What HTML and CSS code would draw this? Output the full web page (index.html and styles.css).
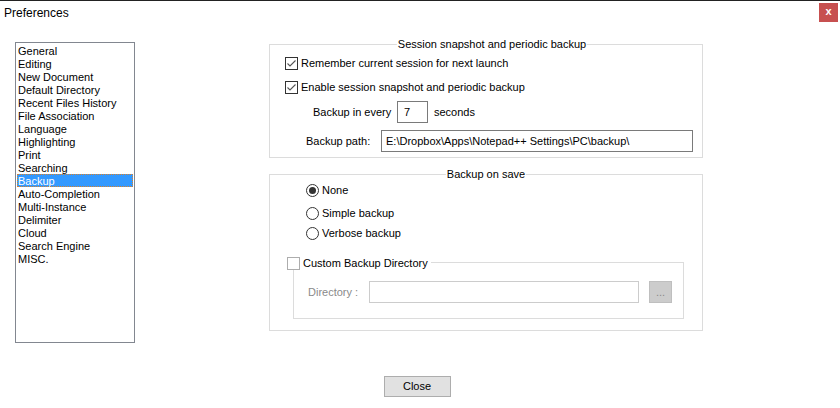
FILE: index.html
```html
<!DOCTYPE html>
<html lang="en">
  <head>
    <meta charset="UTF-8" />
    <title>Preferences</title>
    <link rel="stylesheet" href="styles.css">
  </head>
  <body>
    <div class="titlebar">
      <span class="title">Preferences</span>
      <span class="close-x">x</span>
    </div>

    <div class="main">
      <ul class="nav">
        <li>General</li>
        <li>Editing</li>
        <li>New Document</li>
        <li>Default Directory</li>
        <li>Recent Files History</li>
        <li>File Association</li>
        <li>Language</li>
        <li>Highlighting</li>
        <li>Print</li>
        <li>Searching</li>
        <li class="active">Backup</li>
        <li>Auto-Completion</li>
        <li>Multi-Instance</li>
        <li>Delimiter</li>
        <li>Cloud</li>
        <li>Search Engine</li>
        <li>MISC.</li>
      </ul>

      <div class="panel">
        <div class="group g-session">
          <span class="group-title">Session snapshot and periodic backup</span>
          <div class="row">
            <span class="check on"><svg width="11" height="11" viewBox="0 0 11 11"><polyline points="1.5,5.5 4,8 9.5,2.5" fill="none" stroke="#555" stroke-width="1.1"/></svg></span>
            <span>Remember current session for next launch</span>
          </div>
          <div class="row">
            <span class="check on"><svg width="11" height="11" viewBox="0 0 11 11"><polyline points="1.5,5.5 4,8 9.5,2.5" fill="none" stroke="#555" stroke-width="1.1"/></svg></span>
            <span>Enable session snapshot and periodic backup</span>
          </div>
          <div class="row row-every">
            <span class="lbl lbl-every">Backup in every</span>
            <span class="field field-num">7</span>
            <span class="unit">seconds</span>
          </div>
          <div class="row row-path">
            <span class="lbl lbl-path">Backup path:</span>
            <span class="field field-path">E:\Dropbox\Apps\Notepad++ Settings\PC\backup\</span>
          </div>
        </div>

        <div class="group g-save">
          <span class="group-title">Backup on save</span>
          <div class="radio-row first">
            <span class="radio on"></span>
            <span>None</span>
          </div>
          <div class="radio-row">
            <span class="radio"></span>
            <span>Simple backup</span>
          </div>
          <div class="radio-row">
            <span class="radio"></span>
            <span>Verbose backup</span>
          </div>

          <div class="subgroup">
            <span class="sub-legend">
              <span class="check off"></span>
              <span>Custom Backup Directory</span>
            </span>
            <div class="dir-row">
              <span class="lbl-dir">Directory :</span>
              <span class="field field-dir"></span>
              <span class="dots">...</span>
            </div>
          </div>
        </div>
      </div>
    </div>

    <div class="footer">
      <span class="btn">Close</span>
    </div>
  </body>
</html>
```

FILE: styles.css
```css
body {
  margin: 0;
  width: 840px;
  height: 408px;
  background: #fff;
  font-family: "Liberation Sans", Arial, sans-serif;
  font-size: 11px;
  color: #000;
  border-top: 1px solid #222;
  box-sizing: border-box;
  overflow: hidden;
}

.titlebar {
  height: 25px;
  display: flex;
  align-items: flex-start;
  justify-content: space-between;
}

.title {
  font-size: 12px;
  margin: 5px 0 0 4px;
}

.close-x {
  width: 19px;
  height: 19px;
  margin: 2px 2px 0 0;
  background: #c75050;
  color: #fff;
  font-weight: bold;
  font-size: 11px;
  line-height: 17px;
  text-align: center;
}

.main {
  display: flex;
  align-items: flex-start;
  padding: 16px 0 0 15px;
}

.nav {
  list-style: none;
  margin: 0;
  padding: 1px;
  width: 120px;
  height: 301px;
  box-sizing: border-box;
  border: 1px solid #828790;
}

.nav li {
  height: 13px;
  line-height: 14px;
  padding-left: 1px;
  white-space: nowrap;
}

.nav li.active {
  background: #3399ff;
  color: #fff;
  outline: 1px dotted #d9822b;
  outline-offset: -1px;
}

.panel {
  margin: 2px 0 0 134px;
  width: 434px;
}

.group {
  position: relative;
  border: 1px solid #dcdcdc;
  box-sizing: border-box;
}

.group-title {
  position: absolute;
  top: -7px;
  left: 50%;
  transform: translateX(-50%);
  background: #fff;
  padding: 0 1px;
  white-space: nowrap;
  line-height: 13px;
}

.g-session {
  height: 114px;
  padding: 6px 0 0 15px;
}

.g-session .group-title {
  margin-left: 6px;
}

.row {
  display: flex;
  align-items: center;
  height: 24px;
}

.row-every {
  margin-top: 1px;
}

.row-path {
  margin-top: 5px;
}

.check {
  width: 13px;
  height: 13px;
  box-sizing: border-box;
  border: 1px solid #333;
  margin-right: 3px;
  display: flex;
  align-items: center;
  justify-content: center;
  background: #fff;
}

.check.off {
  border-color: #adadad;
}

.lbl-every {
  margin-left: 28px;
  width: 84px;
}

.lbl-path {
  margin-left: 21px;
  width: 75px;
}

.field {
  height: 22px;
  box-sizing: border-box;
  border: 1px solid #7a7a7a;
  line-height: 20px;
  padding-left: 4px;
  background: #fff;
  white-space: nowrap;
}

.field-num {
  width: 31px;
  padding-left: 6px;
}

.unit {
  margin-left: 6px;
}

.field-path {
  width: 312px;
}

.g-save {
  margin-top: 16px;
  height: 157px;
  padding: 5px 0 0 36px;
}

.radio-row {
  display: flex;
  align-items: center;
  height: 20px;
}

.radio-row.first {
  margin-bottom: 3px;
}

.radio {
  width: 13px;
  height: 13px;
  box-sizing: border-box;
  border: 1px solid #333;
  border-radius: 50%;
  margin-right: 3px;
  display: flex;
  align-items: center;
  justify-content: center;
}

.radio.on::after {
  content: "";
  width: 7px;
  height: 7px;
  border-radius: 50%;
  background: #333;
}

.subgroup {
  position: relative;
  margin: 19px 0 0 -13px;
  width: 391px;
  height: 57px;
  box-sizing: border-box;
  border: 1px solid #dcdcdc;
  padding: 18px 0 0 14px;
}

.sub-legend {
  position: absolute;
  top: -6px;
  left: -7px;
  display: flex;
  align-items: center;
  background: #fff;
  padding: 0 3px 0 0;
  line-height: 13px;
}

.dir-row {
  display: flex;
  align-items: center;
}

.lbl-dir {
  color: #8a8a8a;
  width: 61px;
}

.field-dir {
  width: 270px;
  border-color: #cccccc;
}

.dots {
  margin-left: 10px;
  width: 23px;
  height: 22px;
  box-sizing: border-box;
  background: #cccccc;
  border: 1px solid #bfbfbf;
  color: #8a8a8a;
  text-align: center;
  line-height: 20px;
}

.footer {
  display: flex;
  justify-content: center;
  padding: 33px 6px 0 0;
}

.btn {
  width: 67px;
  height: 21px;
  box-sizing: border-box;
  background: #e1e1e1;
  border: 1px solid #adadad;
  text-align: center;
  line-height: 19px;
}
```
